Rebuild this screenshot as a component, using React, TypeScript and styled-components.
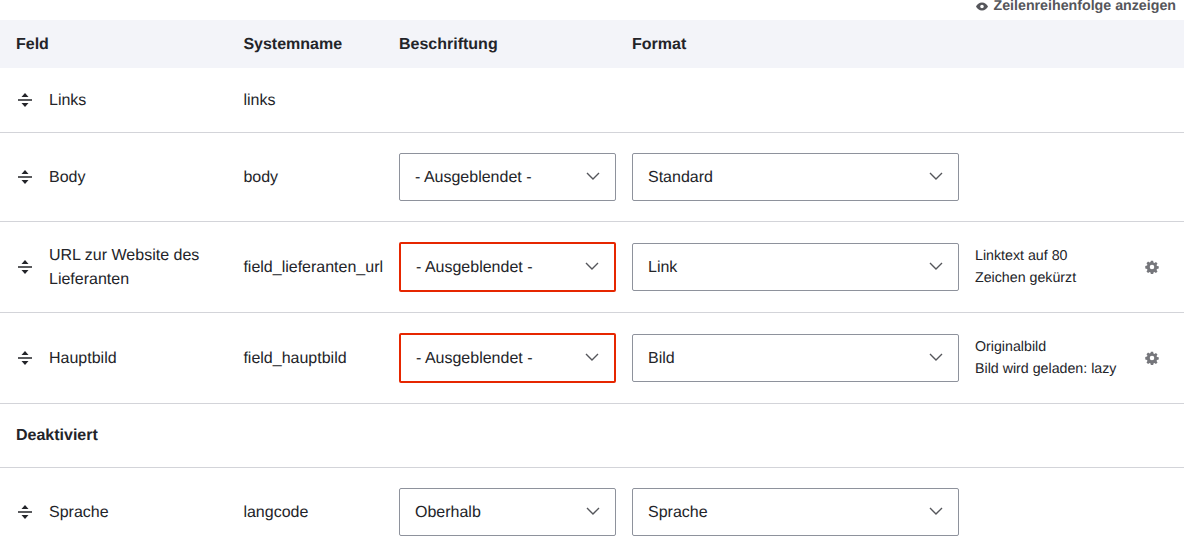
import React from "react";
import styled, { createGlobalStyle } from "styled-components";

const GlobalStyle = createGlobalStyle`
  html, body {
    margin: 0;
    background: #fff;
    overflow: hidden;
  }
  body {
    font-family: "Liberation Sans", Arial, sans-serif;
    font-size: 16px;
    color: #232429;
    text-rendering: geometricPrecision;
  }
`;

const COLUMNS = "227.4px 155.6px 233px 343px 1fr 59px";

const Page = styled.div`
  width: 1184px;
  height: 556px;
  overflow: hidden;
`;

const TopBar = styled.div`
  display: flex;
  justify-content: flex-end;
  align-items: flex-start;
  height: 20px;
  padding: 0 8px;
  box-sizing: border-box;
`;

const ToggleLink = styled.a`
  display: flex;
  align-items: center;
  gap: 5px;
  font-size: 14.22px;
  line-height: 12px;
  font-weight: 700;
  color: #55565b;
`;

const HeaderRow = styled.div`
  display: grid;
  grid-template-columns: ${COLUMNS};
  align-items: center;
  height: 48px;
  background: #f3f4f9;
  font-weight: 700;
`;

const Row = styled.div`
  display: grid;
  grid-template-columns: ${COLUMNS};
  align-items: center;
  min-height: 64px;
  border-bottom: 1px solid #d3d4d9;
  line-height: 24px;

  &:last-child {
    border-bottom: 0;
  }
`;

const RegionRow = styled(Row)`
  min-height: 63px;
`;

const Cell = styled.div`
  padding: 2px 0 0 16px;
`;

const Label = styled.span`
  display: block;
  padding-top: 2px;
`;

const FieldCell = styled.div`
  display: flex;
  align-items: center;
  gap: 16px;
  padding: 0 16px 0 17px;
`;

const SelectCell = styled.div`
  padding: 20px 0 20px 16px;
`;

const RegionTitle = styled.div`
  grid-column: 1 / -1;
  padding-left: 16px;
  font-weight: 700;
`;

const Select = styled.div<{ $error?: boolean }>`
  display: flex;
  align-items: center;
  justify-content: space-between;
  box-sizing: border-box;
  height: ${({ $error }) => ($error ? "50px" : "48px")};
  padding: 0 15px;
  border: ${({ $error }) => ($error ? "2px solid #e62600" : "1px solid #8e929c")};
  border-radius: 2px;
  background: #fff;
  color: #232429;
`;

const ChevronIcon = styled.svg`
  margin-bottom: 2px;
`;

const Summary = styled.div`
  padding-left: 16px;
  font-size: 14.22px;
  line-height: 22px;
  white-space: nowrap;
`;

const GearCell = styled.div`
  display: flex;
  justify-content: flex-start;
  padding-left: 20px;
`;

const DragHandle = () => (
  <svg width="16" height="16" viewBox="0 0 16 16" style={{ flex: "none" }}>
    <path d="M8 1 L11.5 5 H4.5 Z M8 15 L4.5 11 H11.5 Z" fill="#232429" />
    <rect x="1" y="7.25" width="14" height="1.5" fill="#232429" />
  </svg>
);

const Chevron = () => (
  <ChevronIcon width="14" height="8" viewBox="0 0 14 8" fill="none">
    <path d="M1 1 L7 7 L13 1" stroke="#55565b" strokeWidth="1.4" />
  </ChevronIcon>
);

const Eye = () => (
  <svg width="12" height="9" viewBox="0 0 12 9">
    <path
      fillRule="evenodd"
      fill="#55565b"
      d="M6 0.4C3.3 0.4 1 2.4 0 4.5c1 2.1 3.3 4.1 6 4.1s5-2 6-4.1C11 2.4 8.7 0.4 6 0.4ZM6 6.3a1.8 1.8 0 1 1 0-3.6 1.8 1.8 0 0 1 0 3.6Z"
    />
  </svg>
);

const Gear = () => (
  <svg width="14" height="14" viewBox="0 0 16 16">
    <path
      fillRule="evenodd"
      fill="#75767b"
      d="M6.7 0.8h2.6l.4 2 1.1.5 1.7-1.1 1.8 1.8-1.1 1.7.5 1.1 2 .4v2.6l-2 .4-.5 1.1 1.1 1.7-1.8 1.8-1.7-1.1-1.1.5-.4 2H6.7l-.4-2-1.1-.5-1.7 1.1-1.8-1.8 1.1-1.7-.5-1.1-2-.4V6.8l2-.4.5-1.1-1.1-1.7 1.8-1.8 1.7 1.1 1.1-.5ZM8 5.4a2.6 2.6 0 1 0 0 5.2 2.6 2.6 0 0 0 0-5.2Z"
    />
  </svg>
);

type FieldRow = {
  label: string;
  machine: string;
  caption?: string;
  format?: string;
  error?: boolean;
  summary?: string[];
};

const fields: FieldRow[] = [
  { label: "Links", machine: "links" },
  { label: "Body", machine: "body", caption: "- Ausgeblendet -", format: "Standard" },
  {
    label: "URL zur Website des Lieferanten",
    machine: "field_lieferanten_url",
    caption: "- Ausgeblendet -",
    format: "Link",
    error: true,
    summary: ["Linktext auf 80", "Zeichen gekürzt"],
  },
  {
    label: "Hauptbild",
    machine: "field_hauptbild",
    caption: "- Ausgeblendet -",
    format: "Bild",
    error: true,
    summary: ["Originalbild", "Bild wird geladen: lazy"],
  },
];

const disabled: FieldRow[] = [
  { label: "Sprache", machine: "langcode", caption: "Oberhalb", format: "Sprache" },
];

const FieldLine = ({ field }: { field: FieldRow }) => (
  <Row>
    <FieldCell>
      <DragHandle />
      <Label>{field.label}</Label>
    </FieldCell>
    <Cell>{field.machine}</Cell>
    {field.caption ? (
      <SelectCell>
        <Select $error={field.error}>
          <Label>{field.caption}</Label>
          <Chevron />
        </Select>
      </SelectCell>
    ) : (
      <Cell />
    )}
    {field.format ? (
      <SelectCell>
        <Select>
          <Label>{field.format}</Label>
          <Chevron />
        </Select>
      </SelectCell>
    ) : (
      <Cell />
    )}
    <Summary>
      {field.summary?.map((line) => (
        <div key={line}>{line}</div>
      ))}
    </Summary>
    <GearCell>{field.summary && <Gear />}</GearCell>
  </Row>
);

export default function App() {
  return (
    <Page>
      <GlobalStyle />
      <TopBar>
        <ToggleLink>
          <Eye />
          Zeilenreihenfolge anzeigen
        </ToggleLink>
      </TopBar>
      <HeaderRow>
        <Cell>Feld</Cell>
        <Cell>Systemname</Cell>
        <Cell>Beschriftung</Cell>
        <Cell>Format</Cell>
      </HeaderRow>
      {fields.map((field) => (
        <FieldLine key={field.machine} field={field} />
      ))}
      <RegionRow>
        <RegionTitle>Deaktiviert</RegionTitle>
      </RegionRow>
      {disabled.map((field) => (
        <FieldLine key={field.machine} field={field} />
      ))}
    </Page>
  );
}
